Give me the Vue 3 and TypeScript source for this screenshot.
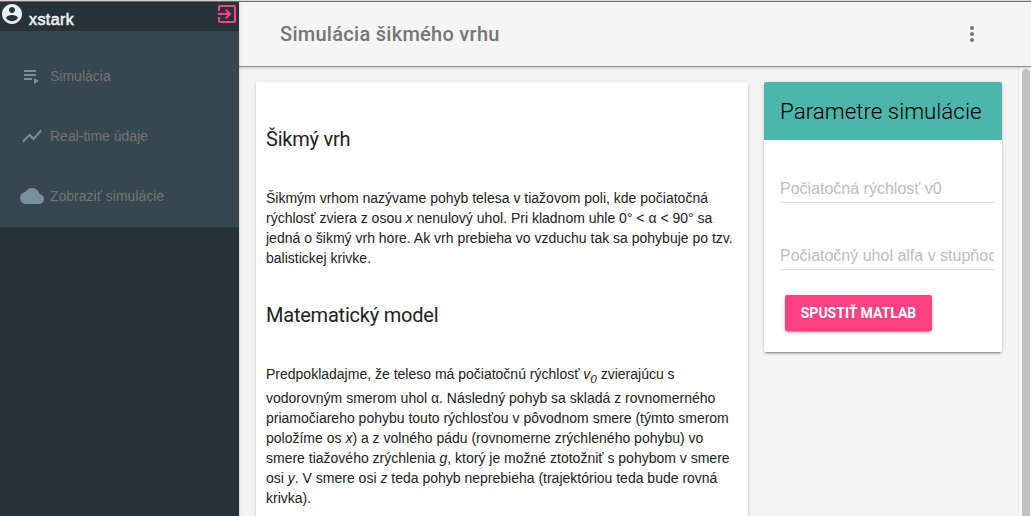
<script setup lang="ts">
import { ref } from 'vue'

interface NavItem {
  label: string
  icon: 'playlist' | 'chart' | 'cloud'
}

const navItems: NavItem[] = [
  { label: 'Simulácia', icon: 'playlist' },
  { label: 'Real-time údaje', icon: 'chart' },
  { label: 'Zobraziť simulácie', icon: 'cloud' },
]

const velocity = ref('')
const angle = ref('')
</script>

<template>
  <div class="window">
    <div class="topline"></div>
    <div class="layout">
      <aside class="drawer">
        <div class="user">
          <svg class="avatar" viewBox="0 0 24 24"><path d="M12 2C6.48 2 2 6.48 2 12s4.48 10 10 10 10-4.48 10-10S17.52 2 12 2zm0 3c1.66 0 3 1.34 3 3s-1.34 3-3 3-3-1.34-3-3 1.34-3 3-3zm0 14.2c-2.5 0-4.71-1.28-6-3.22.03-1.99 4-3.08 6-3.08 1.99 0 5.97 1.09 6 3.08-1.29 1.94-3.5 3.22-6 3.22z" /></svg>
          <span class="name">xstark</span>
          <svg class="exit" viewBox="0 0 24 24"><path d="M10.09 15.59L11.5 17l5-5-5-5-1.41 1.41L12.67 11H3v2h9.67l-2.58 2.59zM19 3H5c-1.11 0-2 .9-2 2v4h2V5h14v14H5v-4H3v4c0 1.1.89 2 2 2h14c1.1 0 2-.9 2-2V5c0-1.100-.9-2-2-2z" /></svg>
        </div>
        <nav class="nav">
          <a v-for="item in navItems" :key="item.label" class="nav-item">
            <svg class="nav-icon" viewBox="0 0 24 24">
              <path v-if="item.icon === 'playlist'" d="M4 6h12v2H4zM4 10h12v2H4zM4 14h8v2H4zM14 14v6l5-3z" />
              <path v-else-if="item.icon === 'chart'" d="M3.5 18.49l6-6.01 4 4L22 6.92l-1.41-1.41-7.09 7.97-4-4L2 16.99z" />
              <path v-else d="M19.35 10.04C18.67 6.59 15.64 4 12 4 9.11 4 6.600 5.64 5.350 8.040 2.340 8.360 0 10.910 0 14c0 3.310 2.690 6 6 6h13c2.760 0 5-2.240 5-5 0-2.640-2.050-4.780-4.650-4.960z" />
            </svg>
            <span>{{ item.label }}</span>
          </a>
        </nav>
      </aside>
      <div class="content">
        <header class="header">
          <span class="title">Simulácia šikmého vrhu</span>
          <svg class="more" viewBox="0 0 24 24"><path d="M12 8c1.1 0 2-.9 2-2s-.9-2-2-2-2 .9-2 2 .9 2 2 2zm0 2c-1.1 0-2 .9-2 2s.9 2 2 2 2-.9 2-2-.9-2-2-2zm0 6c-1.1 0-2 .9-2 2s.9 2 2 2 2-.9 2-2-.9-2-2-2z" /></svg>
        </header>
        <div class="body">
          <main class="main">
            <article class="card article">
              <h5>Šikmý vrh</h5>
              <p>
                Šikmým vrhom nazývame pohyb telesa v tiažovom poli, kde počiatočná<br />
                rýchlosť zviera z osou <i>x</i> nenulový uhol. Pri kladnom uhle 0° &lt; α &lt; 90° sa<br />
                jedná o šikmý vrh hore. Ak vrh prebieha vo vzduchu tak sa pohybuje po tzv.<br />
                balistickej krivke.
              </p>
              <h5 class="second">Matematický model</h5>
              <p>
                <span class="tall">Predpokladajme, že teleso má počiatočnú rýchlosť <i>v<sub>0</sub></i> zvierajúcu s</span>
                vodorovným smerom uhol α. Následný pohyb sa skladá z rovnomerného<br />
                priamočiareho pohybu touto rýchlosťou v pôvodnom smere (týmto smerom<br />
                položíme os <i>x</i>) a z volného pádu (rovnomerne zrýchleného pohybu) vo<br />
                smere tiažového zrýchlenia <i>g</i>, ktorý je možné ztotožniť s pohybom v smere<br />
                osi <i>y</i>. V smere osi <i>z</i> teda pohyb neprebieha (trajektóriou teda bude rovná<br />
                krivka).
              </p>
            </article>
            <section class="card params">
              <div class="params-title">Parametre simulácie</div>
              <form class="form" @submit.prevent>
                <input v-model="velocity" class="field" placeholder="Počiatočná rýchlosť v0" />
                <input v-model="angle" class="field" placeholder="Počiatočný uhol alfa v stupňoch" />
                <button class="run" type="submit">Spustiť Matlab</button>
              </form>
            </section>
          </main>
          <div class="scrollbar"><div class="thumb"></div></div>
        </div>
      </div>
    </div>
  </div>
</template>

<style>
html,
body {
  margin: 0;
  overflow: hidden;
}
</style>

<style scoped>
.window {
  width: 1031px;
  height: 516px;
  overflow: hidden;
  display: flex;
  flex-direction: column;
  background: #f4f4f4;
  font-family: "Liberation Sans", Arial, sans-serif;
}
.topline {
  height: 1px;
  flex: none;
  background: #d9d8d6;
  border-bottom: 1px solid #6c6c6a;
}
.layout {
  flex: 1;
  min-height: 0;
  display: flex;
}
.drawer {
  width: 239px;
  flex: none;
  background: #263238;
  box-shadow: 0 2px 2px 0 rgba(0, 0, 0, 0.14), 0 1px 5px 0 rgba(0, 0, 0, 0.12);
  z-index: 2;
}
.user {
  height: 29px;
  display: flex;
  align-items: flex-start;
}
.avatar {
  width: 24px;
  height: 24px;
  fill: #eceff1;
}
.name {
  margin: 8px 0 0 5px;
  font-size: 16px;
  line-height: 20px;
  letter-spacing: 0.4px;
  color: #eceff1;
  -webkit-text-stroke: 0.6px #eceff1;
}
.exit {
  width: 24px;
  height: 24px;
  margin-left: auto;
  fill: #ff4081;
}
.nav {
  box-sizing: border-box;
  height: 196px;
  padding: 15px 0 0 20px;
  background: #37474f;
}
.nav-item {
  height: 60px;
  display: flex;
  align-items: center;
  gap: 6px;
  font-size: 14px;
  color: #757575;
}
.nav-icon {
  width: 24px;
  height: 24px;
  fill: #78909c;
}
.content {
  flex: 1;
  min-width: 0;
  display: flex;
  flex-direction: column;
}
.header {
  height: 64px;
  box-sizing: border-box;
  flex: none;
  display: flex;
  align-items: center;
  padding: 0 47px 0 41px;
  background: #f5f5f5;
  box-shadow: 0 1px 1px rgba(0, 0, 0, 0.32), 0 2px 3px rgba(0, 0, 0, 0.14);
  z-index: 1;
}
.title {
  font: 500 20px/24px Roboto, sans-serif;
  letter-spacing: 0.28px;
  color: #757575;
}
.more {
  width: 24px;
  height: 24px;
  margin-left: auto;
  fill: #757575;
}
.body {
  flex: 1;
  min-height: 0;
  display: flex;
}
.main {
  flex: 1;
  min-width: 0;
  display: flex;
  align-items: flex-start;
  gap: 16px;
  padding: 16px 16px 0 17px;
}
.card {
  box-sizing: border-box;
  background: #fff;
  border-radius: 2px;
  box-shadow: 0 2px 2px 0 rgba(0, 0, 0, 0.14), 0 3px 1px -2px rgba(0, 0, 0, 0.2), 0 1px 5px 0 rgba(0, 0, 0, 0.12);
}
.article {
  width: 492px;
  height: 560px;
  padding: 45px 10px 0;
  color: #212121;
  white-space: nowrap;
}
.article h5 {
  margin: 0;
  font: 400 20px/24px Roboto, sans-serif;
  letter-spacing: -0.22px;
}
.article p {
  margin: 37px 0 0;
  font-size: 14px;
  line-height: 20px;
}
.article .second {
  margin-top: 35px;
}
.tall {
  display: block;
  height: 24px;
}
.tall sub {
  font-size: 11.67px;
  line-height: 0;
}
.params {
  width: 238px;
  height: 270px;
}
.params-title {
  height: 58px;
  padding-left: 16px;
  border-radius: 2px 2px 0 0;
  background: #4db6ac;
  color: #000;
  font: 300 22.4px/58px Roboto, sans-serif;
  white-space: nowrap;
}
.form {
  padding: 36px 8px 0 16px;
}
.field {
  display: block;
  box-sizing: border-box;
  width: 100%;
  height: 27px;
  margin: 0 0 40px;
  padding: 0;
  border: 0;
  border-bottom: 1px solid #e0e0e0;
  outline: 0;
  background: none;
  font: 16px "Liberation Sans", Arial, sans-serif;
}
.field::placeholder {
  color: #bdbdbd;
}
.run {
  display: block;
  width: 147px;
  height: 36px;
  margin: -15px 0 0 5px;
  padding: 0;
  border: 0;
  border-radius: 2px;
  background: #ff4081;
  color: #fff;
  font: 700 14px/36px Roboto, sans-serif;
  text-transform: uppercase;
  box-shadow: 0 2px 2px 0 rgba(0, 0, 0, 0.14), 0 3px 1px -2px rgba(0, 0, 0, 0.2), 0 1px 5px 0 rgba(0, 0, 0, 0.12);
}
.scrollbar {
  width: 13px;
  flex: none;
  box-sizing: border-box;
  padding: 3px 1px 0 3px;
  border-left: 1px solid #e8e8e8;
  background: #f7f7f7;
}
.thumb {
  height: 100%;
  border-radius: 4px 4px 0 0;
  background: #c1c1c1;
}
</style>
